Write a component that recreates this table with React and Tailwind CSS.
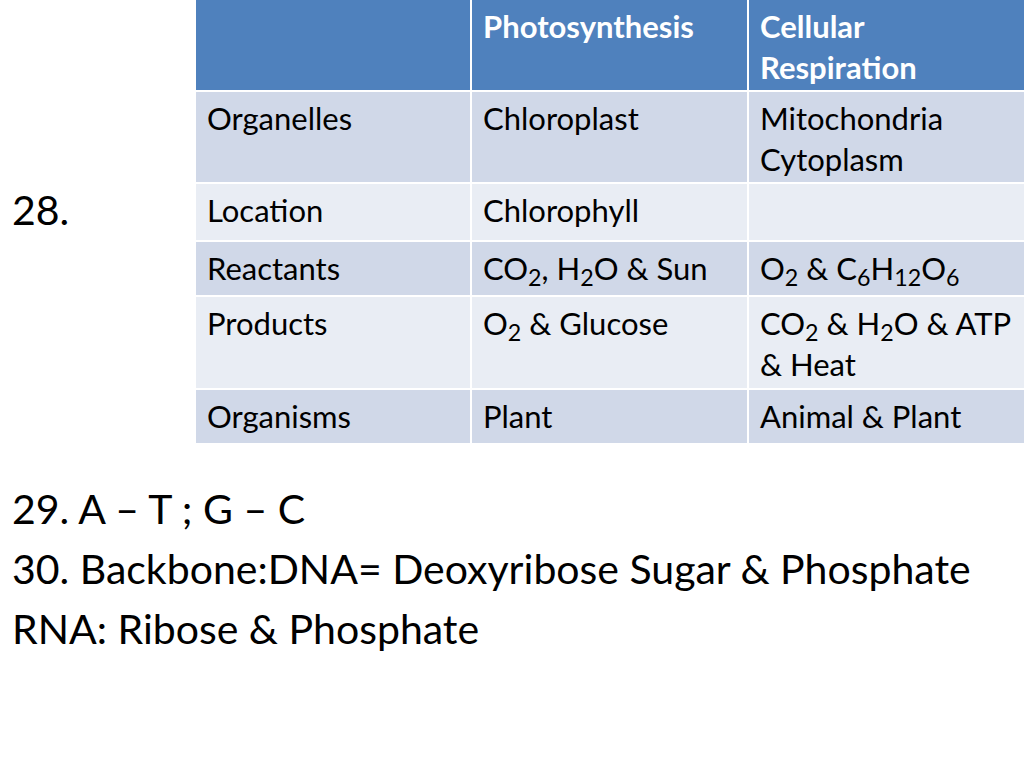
import React from 'react';

const font = { fontFamily: 'Lato, "Liberation Sans", sans-serif' };

const Cell = ({ children, bg, className = '' }) => (
    <div className={`${bg} px-[11px] pt-[6px] text-[31px] leading-[41px] text-black whitespace-nowrap ${className}`}>
        {children}
    </div>
);

const App = () => {
    const dark = 'bg-[#d0d8e8]';
    const light = 'bg-[#e9edf4]';
    return (
        <div className="w-[1024px] h-[768px] bg-white overflow-hidden" style={font}>
            {/* Question 28 + table */}
            <div className="flex">
                <div className="w-[196px] shrink-0 pl-[12px] pt-[186px] text-[41px] leading-[48px] text-black">28.</div>
                <div className="grid shrink-0 grid-cols-[274px_275px_276px] grid-rows-[90px_90px_56px_53px_91px_53px] gap-[2px] bg-white">
                    {/* Header */}
                    <div className="bg-[#4f81bd]"></div>
                    <Cell bg="bg-[#4f81bd]" className="font-bold text-white">Photosynthesis</Cell>
                    <Cell bg="bg-[#4f81bd]" className="font-bold text-white">Cellular<br />Respiration</Cell>

                    <Cell bg={dark}>Organelles</Cell>
                    <Cell bg={dark}>Chloroplast</Cell>
                    <Cell bg={dark}>Mitochondria<br />Cytoplasm</Cell>

                    <Cell bg={light}>Location</Cell>
                    <Cell bg={light}>Chlorophyll</Cell>
                    <Cell bg={light}></Cell>

                    <Cell bg={dark}>Reactants</Cell>
                    <Cell bg={dark}>CO<sub>2</sub>, H<sub>2</sub>O &amp; Sun</Cell>
                    <Cell bg={dark}>O<sub>2</sub> &amp; C<sub>6</sub>H<sub>12</sub>O<sub>6</sub></Cell>

                    <Cell bg={light}>Products</Cell>
                    <Cell bg={light}>O<sub>2</sub> &amp; Glucose</Cell>
                    <Cell bg={light}>CO<sub>2</sub> &amp; H<sub>2</sub>O &amp; ATP<br />&amp; Heat</Cell>

                    <Cell bg={dark}>Organisms</Cell>
                    <Cell bg={dark}>Plant</Cell>
                    <Cell bg={dark}>Animal &amp; Plant</Cell>
                </div>
            </div>

            {/* Questions 29 - 30 */}
            <div className="pl-[12px] pt-[36px] text-[41px] leading-[60px] text-black">
                <p>29. A – T ; G – C</p>
                <p>30. Backbone:DNA= Deoxyribose Sugar &amp; Phosphate</p>
                <p>RNA: Ribose &amp; Phosphate</p>
            </div>
        </div>
    );
};

export default App;
